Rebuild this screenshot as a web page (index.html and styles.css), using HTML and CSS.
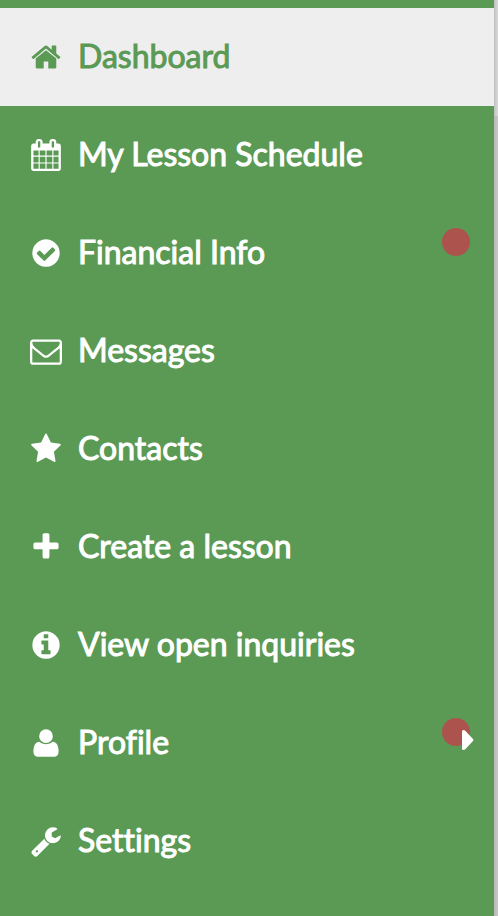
FILE: index.html
```html
<!DOCTYPE html>
<html lang="en">
<head>
  <meta charset="UTF-8">
  <meta name="viewport" content="width=device-width, initial-scale=1.0">
  <title>Dashboard</title>
  <link rel="stylesheet" href="styles.css">
</head>
<body>
<div class="page">
  <nav class="sidebar">
    <a href="#" class="menu-item active">
      <svg class="icon" viewBox="0 0 1792 1792"><path d="M1472 992v480q0 26-19 45t-45 19h-384v-384h-256v384h-384q-26 0-45-19t-19-45v-480q0-1 .5-3t.5-3l575-474 575 474q1 2 1 6zm223-69l-62 74q-8 9-21 11h-3q-13 0-21-7l-692-577-692 577q-12 8-24 7-13-2-21-11l-62-74q-8-10-7-23.5t11-21.5l719-599q32-26 76-26t76 26l244 204v-195q0-14 9-23t23-9h192q14 0 23 9t9 23v408l219 182q10 8 11 21.5t-7 23.5z"/></svg>
      <span>Dashboard</span>
    </a>
    <a href="#" class="menu-item">
      <svg class="icon" viewBox="0 0 1792 1792"><path d="M192 1664h288v-288h-288v288zm352 0h320v-288h-320v288zm-352-352h288v-320h-288v320zm352 0h320v-320h-320v320zm-352-384h288v-288h-288v288zm736 736h320v-288h-320v288zm-384-736h320v-288h-320v288zm768 736h288v-288h-288v288zm-384-352h320v-320h-320v320zm-352-864v-288q0-13-9.500-22.500t-22.500-9.500h-64q-13 0-22.500 9.500t-9.500 22.500v288q0 13 9.500 22.500t22.500 9.500h64q13 0 22.500-9.500t9.500-22.500zm736 864h288v-320h-288v320zm-384-384h320v-288h-320v288zm384 0h288v-288h-288v288zm32-480v-288q0-13-9.500-22.500t-22.500-9.500h-64q-13 0-22.500 9.500t-9.500 22.500v288q0 13 9.500 22.500t22.500 9.500h64q13 0 22.500-9.500t9.500-22.500zm384-64v1280q0 52-38 90t-90 38h-1408q-52 0-90-38t-38-90v-1280q0-52 38-90t90-38h128v-96q0-66 47-113t113-47h64q66 0 113 47t47 113v96h384v-96q0-66 47-113t113-47h64q66 0 113 47t47 113v96h128q52 0 90 38t38 90z"/></svg>
      <span>My Lesson Schedule</span>
    </a>
    <a href="#" class="menu-item">
      <svg class="icon" viewBox="0 0 1792 1792"><path d="M1412 734q0-28-18-46l-91-90q-19-19-45-19t-45 19l-408 407-226-226q-19-19-45-19t-45 19l-91 90q-18 18-18 46 0 27 18 45l362 362q19 19 45 19 27 0 46-19l543-543q18-18 18-45zm252 162q0 209-103 385.500t-279.500 279.500-385.500 103-385.500-103-279.500-279.500-103-385.500 103-385.500 279.500-279.500 385.500-103 385.500 103 279.500 279.500 103 385.500z"/></svg>
      <span>Financial Info</span>
      <i class="dot"></i>
    </a>
    <a href="#" class="menu-item">
      <svg class="icon" viewBox="0 0 1792 1792"><path d="M1664 1504v-768q-32 36-69 66-268 206-426 338-51 43-83 67t-86.500 48.500-102.500 24.500h-2q-48 0-102.500-24.500t-86.500-48.500-83-67q-158-132-426-338-37-30-69-66v768q0 13 9.500 22.500t22.500 9.500h1472q13 0 22.500-9.500t9.500-22.500zm0-1051v-24.500l-.5-13-3-12.500-5.500-9-9-7.500-14-2.500h-1472q-13 0-22.500 9.500t-9.500 22.500q0 168 147 284 193 152 401 317 6 5 35 29.500t46 37.500 44.500 31.500 50.500 27.500 43 9h2q20 0 43-9t50.500-27.500 44.500-31.500 46-37.500 35-29.500q208-165 401-317 54-43 100.500-115.500t46.500-131.500zm128-37v1088q0 66-47 113t-113 47h-1472q-66 0-113-47t-47-113v-1088q0-66 47-113t113-47h1472q66 0 113 47t47 113z"/></svg>
      <span>Messages</span>
    </a>
    <a href="#" class="menu-item">
      <svg class="icon" viewBox="0 0 1792 1792"><path d="M1728 647q0 22-26 48l-363 354 86 500q1 7 1 20 0 21-10.500 35.500t-30.500 14.500q-19 0-40-12l-449-236-449 236q-22 12-40 12-21 0-31.500-14.500t-10.500-35.500q0-6 2-20l86-500-364-354q-25-27-25-48 0-37 56-46l502-73 225-455q19-41 49-41t49 41l225 455 502 73q56 9 56 46z"/></svg>
      <span>Contacts</span>
    </a>
    <a href="#" class="menu-item">
      <svg class="icon" viewBox="0 0 1792 1792"><path d="M1600 736v192q0 40-28 68t-68 28h-416v416q0 40-28 68t-68 28h-192q-40 0-68-28t-28-68v-416h-416q-40 0-68-28t-28-68v-192q0-40 28-68t68-28h416v-416q0-40 28-68t68-28h192q40 0 68 28t28 68v416h416q40 0 68 28t28 68z"/></svg>
      <span>Create a lesson</span>
    </a>
    <a href="#" class="menu-item">
      <svg class="icon" viewBox="0 0 1792 1792"><path d="M1152 1376v-160q0-14-9-23t-23-9h-96v-512q0-14-9-23t-23-9h-320q-14 0-23 9t-9 23v160q0 14 9 23t23 9h96v320h-96q-14 0-23 9t-9 23v160q0 14 9 23t23 9h448q14 0 23-9t9-23zm-128-896v-160q0-14-9-23t-23-9h-192q-14 0-23 9t-9 23v160q0 14 9 23t23 9h192q14 0 23-9t9-23zm640 416q0 209-103 385.500t-279.500 279.500-385.500 103-385.500-103-279.500-279.500-103-385.500 103-385.500 279.500-279.500 385.500-103 385.500 103 279.500 279.500 103 385.500z"/></svg>
      <span>View open inquiries</span>
    </a>
    <a href="#" class="menu-item">
      <svg class="icon" viewBox="0 0 1792 1792"><path d="M1600 1399q0 109-62.500 187t-150.500 78h-982q-88 0-150.500-78t-62.500-187q0-85 8.500-160.500t31.500-152 58.500-131 94-89 134.500-34.500q131 128 377 128t377-128q76 0 134.500 34.500t94 89 58.500 131 31.500 152 8.500 160.500zm-320-887q0 159-112.500 271.500t-271.500 112.500-271.500-112.500-112.500-271.500 112.500-271.500 271.500-112.500 271.500 112.500 112.500 271.500z"/></svg>
      <span>Profile</span>
      <i class="dot"></i>
      <svg class="caret" viewBox="0 0 12 20"><path d="M0 1.500Q0 0 1.500 0 2.500 0 3.500 1L11 9Q12 10 11 11L3.500 19Q2.500 20 1.500 20 0 20 0 18.500z"/></svg>
    </a>
    <a href="#" class="menu-item">
      <svg class="icon" viewBox="0 0 1792 1792"><path d="M448 1472q0-26-19-45t-45-19-45 19-19 45 19 45 45 19 45-19 19-45zm644-420l-682 682q-37 37-90 37-52 0-91-37l-106-108q-38-36-38-90 0-53 37-91l681-681q39 98 114.500 173.500t173.500 114.500zm634-435q0 39-23 106-47 134-164.500 217.500t-258.500 83.500q-185 0-316.500-131.500t-131.500-316.500 131.500-316.500 316.500-131.500q58 0 121.500 16.500t107.500 46.500q16 11 16 28t-16 28l-293 169v224l193 107q5-3 79-48.500t135.500-81 70.500-35.500q15 0 23.500 10t8.500 25z"/></svg>
      <span>Settings</span>
    </a>
  </nav>
  <div class="content">
    <div class="topbar"></div>
  </div>
</div>
</body>
</html>
```
FILE: styles.css
```css
* { margin: 0; padding: 0; box-sizing: border-box; }
body { background: #5b9a55; font-family: Lato, sans-serif; }

.page {
  display: flex;
  min-height: 100vh;
}

/* Sidebar */
.sidebar {
  flex: 1;
  padding: 8px 0;
  background: #5b9a55;
}
.menu-item {
  position: relative;
  display: flex;
  align-items: center;
  gap: 16px;
  height: 98px;
  padding: 0 30px;
  color: white;
  font-size: 32px;
  line-height: 40px;
  text-decoration: none;
  font-variant-ligatures: none;
  -webkit-text-stroke: 1px currentColor;
}
.menu-item span {
  padding-bottom: 2px;
}
.menu-item.active {
  background: #eee;
  color: #5b9a55;
}
.icon {
  width: 32px;
  height: 32px;
  fill: currentColor;
  flex-shrink: 0;
}

/* Notification dot and submenu arrow */
.dot {
  position: absolute;
  top: 24px;
  right: 24px;
  width: 28px;
  height: 28px;
  border-radius: 50%;
  background: #ad534e;
}
.caret {
  position: absolute;
  top: 36px;
  right: 20px;
  width: 12px;
  height: 20px;
  fill: white;
}

/* Edge of the main content */
.content {
  width: 4px;
  background: linear-gradient(to right, #b8b8b8, #c8c8c8);
}
.topbar {
  height: 116px;
  background: linear-gradient(to right, #c0c0c0, #dadada);
}
```
